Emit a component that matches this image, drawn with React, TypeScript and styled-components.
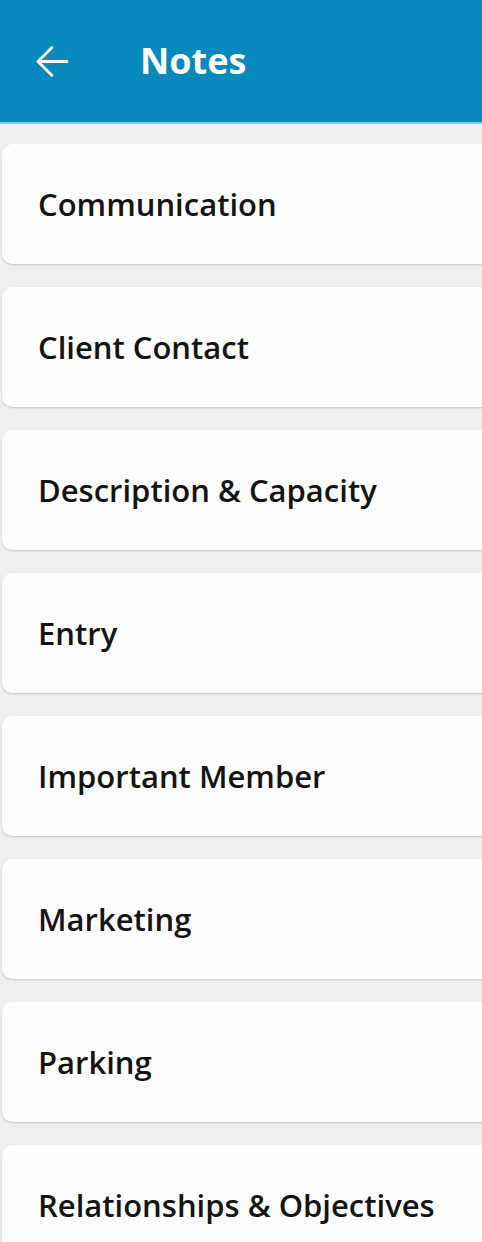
import React from 'react';
import styled, { createGlobalStyle } from 'styled-components';

const GlobalStyle = createGlobalStyle`
  html, body {
    margin: 0;
    padding: 0;
    background: #efeef0;
    font-family: 'Open Sans', 'Noto Sans', sans-serif;
    overflow: hidden;
  }
`;

const Page = styled.div`
  width: 482px;
  height: 1242px;
  display: flex;
  flex-direction: column;
  background: #efeef0;
  overflow: hidden;
`;

const Header = styled.div`
  display: flex;
  align-items: center;
  height: 122px;
  flex-shrink: 0;
  padding-left: 36px;
  background: #0889bd;
  border-bottom: 2px solid #7ccbec;
  color: #fff;
`;

const BackButton = styled.div`
  display: flex;
  align-items: center;
  width: 33px;
  height: 33px;
  margin-right: 71px;
  cursor: pointer;
`;

const Title = styled.div`
  font-size: 36px;
  font-weight: 700;
  margin-top: -2px;
`;

const List = styled.div`
  display: flex;
  flex-direction: column;
  gap: 23px;
  padding: 20px 0 0 2px;
`;

const Card = styled.div`
  display: flex;
  align-items: center;
  flex-shrink: 0;
  width: 520px;
  height: 120px;
  padding-left: 36px;
  box-sizing: border-box;
  background: #fdfdfd;
  border-radius: 10px;
  box-shadow: 0 1px 2px rgba(0, 0, 0, 0.18);
  font-size: 31px;
  font-weight: 600;
  color: #141414;
`;

const items = [
  'Communication',
  'Client Contact',
  'Description & Capacity',
  'Entry',
  'Important Member',
  'Marketing',
  'Parking',
  'Relationships & Objectives',
];

const BackArrow = () => (
  <svg width="33" height="33" viewBox="0 0 33 33" fill="none" stroke="#fff" strokeWidth="2.8" strokeLinecap="round" strokeLinejoin="round">
    <path d="M31 16.5H2" />
    <path d="M16 2.5L2 16.5l14 14" />
  </svg>
);

const App: React.FC = () => (
  <Page>
    <GlobalStyle />
    <Header>
      <BackButton>
        <BackArrow />
      </BackButton>
      <Title>Notes</Title>
    </Header>
    <List>
      {items.map(item => (
        <Card key={item}>{item}</Card>
      ))}
    </List>
  </Page>
);

export default App;
